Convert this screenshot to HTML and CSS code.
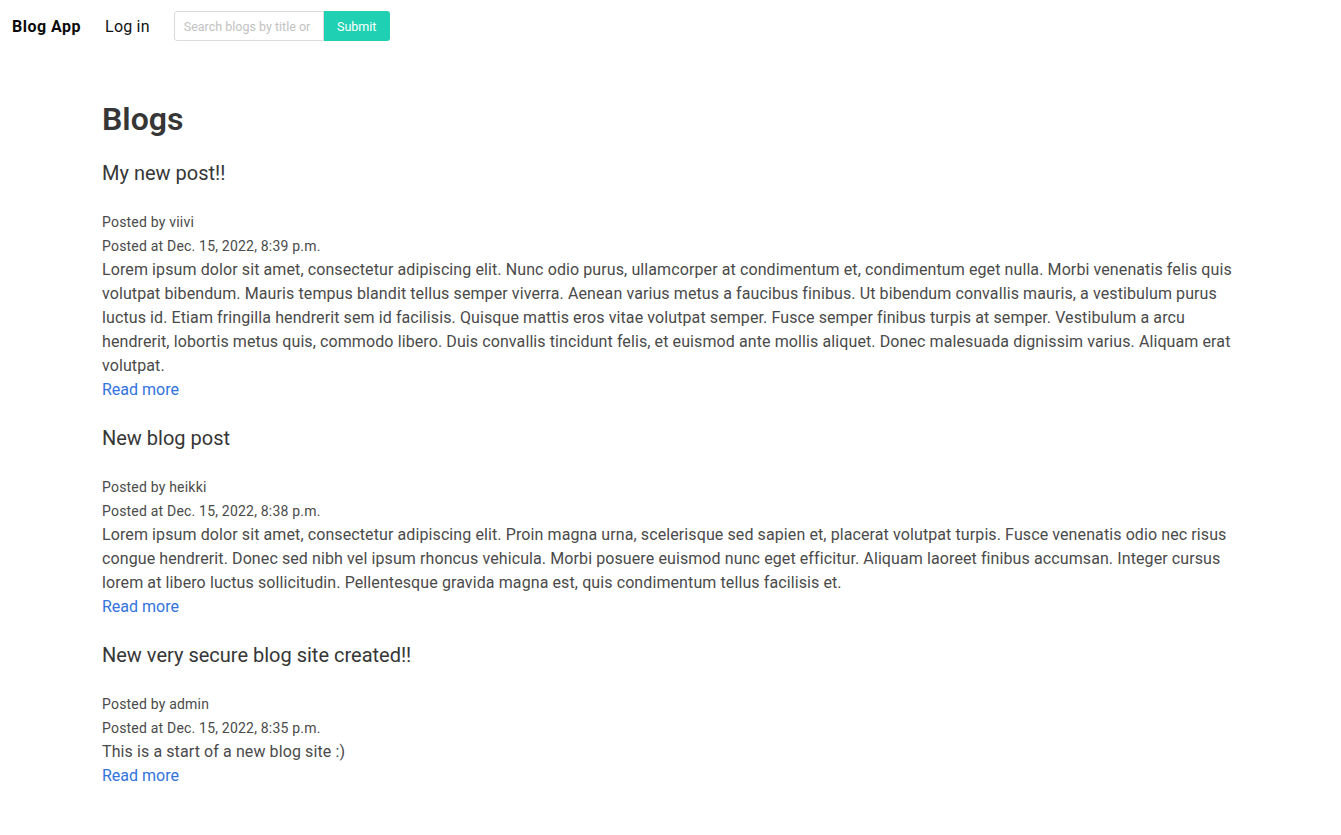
FILE: index.html
```html
<!DOCTYPE html>
<html lang="en">
<head>
<meta charset="utf-8">
<title>Blog App</title>
<link rel="stylesheet" href="styles.css">
</head>
<body>
<nav class="navbar">
  <a class="brand" href="#">Blog App</a>
  <a class="nav-item" href="#">Log in</a>
  <form class="search">
    <input class="search-input" type="text" placeholder="Search blogs by title or content">
    <button class="search-btn" type="button">Submit</button>
  </form>
</nav>
<main class="main">
  <h1 class="page-title">Blogs</h1>
  <article class="post">
    <h2 class="post-title">My new post!!</h2>
    <p class="meta">Posted by viivi</p>
    <p class="meta">Posted at Dec. 15, 2022, 8:39 p.m.</p>
    <p class="body">Lorem ipsum dolor sit amet, consectetur adipiscing elit. Nunc odio purus, ullamcorper at condimentum et, condimentum eget nulla. Morbi venenatis felis quis volutpat bibendum. Mauris tempus blandit tellus semper viverra. Aenean varius metus a faucibus finibus. Ut bibendum convallis mauris, a vestibulum purus luctus id. Etiam fringilla hendrerit sem id facilisis. Quisque mattis eros vitae volutpat semper. Fusce semper finibus turpis at semper. Vestibulum a arcu hendrerit, lobortis metus quis, commodo libero. Duis convallis tincidunt felis, et euismod ante mollis aliquet. Donec malesuada dignissim varius. Aliquam erat volutpat.</p>
    <a class="more" href="#">Read more</a>
  </article>
  <article class="post">
    <h2 class="post-title">New blog post</h2>
    <p class="meta">Posted by heikki</p>
    <p class="meta">Posted at Dec. 15, 2022, 8:38 p.m.</p>
    <p class="body">Lorem ipsum dolor sit amet, consectetur adipiscing elit. Proin magna urna, scelerisque sed sapien et, placerat volutpat turpis. Fusce venenatis odio nec risus congue hendrerit. Donec sed nibh vel ipsum rhoncus vehicula. Morbi posuere euismod nunc eget efficitur. Aliquam laoreet finibus accumsan. Integer cursus lorem at libero luctus sollicitudin. Pellentesque gravida magna est, quis condimentum tellus facilisis et.</p>
    <a class="more" href="#">Read more</a>
  </article>
  <article class="post">
    <h2 class="post-title">New very secure blog site created!!</h2>
    <p class="meta">Posted by admin</p>
    <p class="meta">Posted at Dec. 15, 2022, 8:35 p.m.</p>
    <p class="body">This is a start of a new blog site :)</p>
    <a class="more" href="#">Read more</a>
  </article>
</main>
</body>
</html>
```
FILE: styles.css
```css
* { box-sizing: border-box; }
body {
  margin: 0;
  font-family: Roboto, "Noto Sans", "Liberation Sans", sans-serif;
  color: #4a4a4a;
  background: #fff;
  font-size: 16px;
}
.navbar {
  display: flex;
  align-items: center;
  height: 52px;
  padding: 0 12px;
  gap: 24px;
}
.brand {
  color: #0a0a0a;
  font-weight: 700;
  text-decoration: none;
  font-size: 16px;
  letter-spacing: 0.5px;
}
.nav-item {
  color: #111;
  text-decoration: none;
  font-size: 16px;
  letter-spacing: 0.2px;
}
.search {
  display: flex;
  margin: 0;
}
.search-input {
  width: 150px;
  height: 30px;
  border: 1px solid #dbdbdb;
  border-radius: 3px 0 0 3px;
  padding: 0 9px;
  font-family: inherit;
  font-size: 12.5px;
  color: #363636;
  outline: none;
}
.search-input::placeholder { color: #c2c2c2; }
.search-btn {
  height: 30px;
  width: 66px;
  border: none;
  background: #1fd1b2;
  color: #fff;
  font-family: inherit;
  font-size: 12.5px;
  border-radius: 0 3px 3px 0;
}
.main {
  padding: 48px 102px 40px;
  max-width: 1341px;
}
.page-title {
  margin: 0 0 20px;
  font-size: 32px;
  line-height: 38px;
  font-weight: 600;
  color: #363636;
}
.post { margin-bottom: 21px; }
.post-title {
  margin: 0 0 22px;
  font-size: 20px;
  line-height: 30px;
  font-weight: 400;
  color: #363636;
}
.meta {
  margin: 0;
  font-size: 14px;
  line-height: 24px;
  color: #4a4a4a;
  letter-spacing: 0.2px;
}
.body {
  margin: 0;
  font-size: 16px;
  line-height: 24px;
  color: #4a4a4a;
  letter-spacing: 0.1px;
}
.more {
  display: block;
  font-size: 16px;
  line-height: 24px;
  color: #3273dc;
  text-decoration: none;
}
```
